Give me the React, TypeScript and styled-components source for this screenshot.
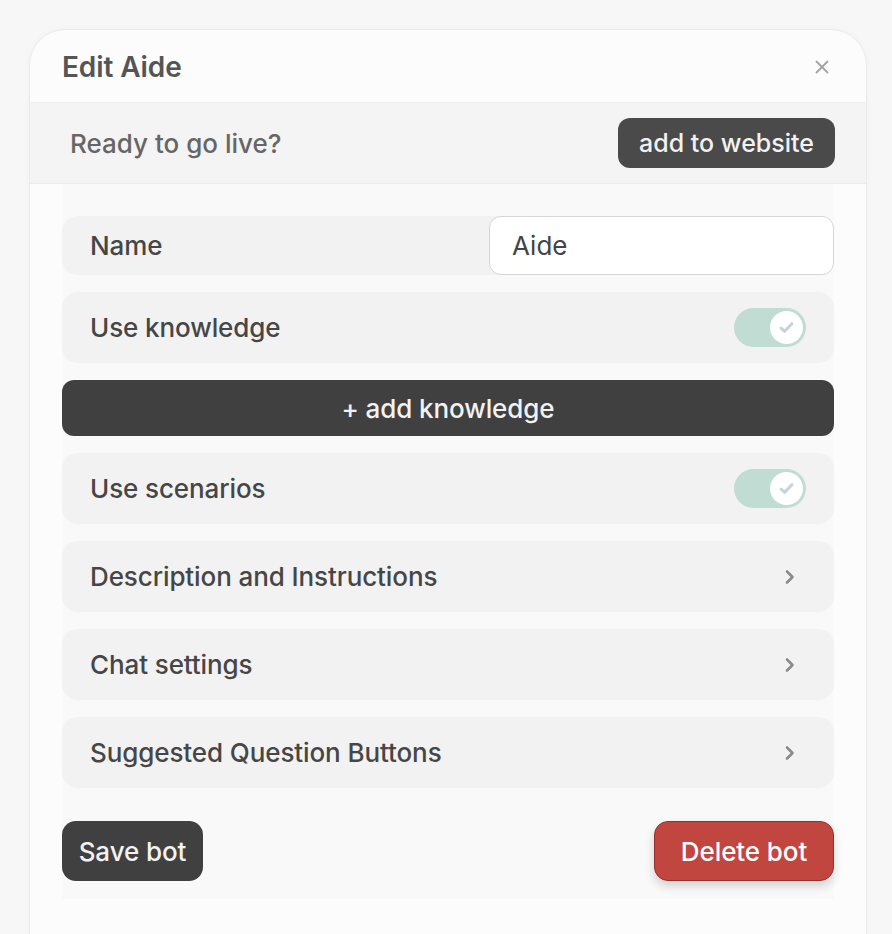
import React, {useState} from "react";
import styled, {createGlobalStyle} from "styled-components";

const GlobalStyle = createGlobalStyle`
  html, body {
    margin: 0;
    padding: 0;
    background: #f7f7f7;
    font-family: Inter, "Noto Sans", sans-serif;
    overflow: hidden;
  }
  * { box-sizing: border-box; }
`;

const Page = styled.div`
  padding: 29px 25px 0 29px;
  height: 934px;
`;

const Card = styled.div`
  background: #fcfcfc;
  border: 1px solid #ebebeb;
  border-radius: 36px 36px 0 0;
  padding-bottom: 80px;
  box-shadow: 0 0 6px rgba(0, 0, 0, 0.03);
`;

const Header = styled.div`
  height: 73px;
  display: flex;
  align-items: center;
  justify-content: space-between;
  padding: 2px 34px 0 32px;
  border-bottom: 1px solid #ededed;
`;

const Title = styled.h2`
  margin: 0;
  font-size: 28px;
  font-weight: 600;
  color: #555;
  letter-spacing: -0.1px;
`;

const CloseButton = styled.button`
  border: none;
  background: none;
  padding: 0;
  width: 20px;
  height: 20px;
  display: flex;
  align-items: center;
  justify-content: center;
  cursor: pointer;
`;

const LiveBand = styled.div`
  height: 81px;
  background: #f4f4f4;
  border-bottom: 1px solid #ececec;
  display: flex;
  align-items: center;
  justify-content: space-between;
  padding: 0 31px 0 40px;
`;

const LiveText = styled.span`
  font-size: 26px;
  font-weight: 500;
  color: #666;
`;

const DarkButton = styled.button<{$full?: boolean; $h: number; $radius: number}>`
  border: none;
  background: #404040;
  color: #f2f2f2;
  font-family: inherit;
  font-size: 26px;
  font-weight: 500;
  letter-spacing: -0.1px;
  height: ${(p) => p.$h}px;
  border-radius: ${(p) => p.$radius}px;
  padding: 0 18px;
  width: ${(p) => (p.$full ? "100%" : "auto")};
  cursor: pointer;
`;

const WebsiteButton = styled(DarkButton)`
  background: #4a4a4a;
  padding: 0 21px;
  font-size: 25px;
  letter-spacing: 0;
`;

const Panel = styled.div`
  margin: 0 32px 0 32px;
  background: #f9f9f9;
  padding: 32px 0 18px;
  display: flex;
  flex-direction: column;
  gap: 17px;
`;

const Row = styled.div<{$h: number}>`
  height: ${(p) => p.$h}px;
  background: #f2f2f2;
  border-radius: 16px;
  display: flex;
  align-items: center;
  justify-content: space-between;
  padding-left: 28px;
  padding-right: 28px;
  cursor: default;
`;

const NavRow = styled(Row)`
  padding-right: 38px;
  cursor: pointer;
`;

const Label = styled.span`
  font-size: 26px;
  font-weight: 500;
  color: #464646;
  letter-spacing: -0.1px;
`;

const NameInput = styled.input`
  width: 345px;
  height: 59px;
  margin-right: -28px;
  border: 1.5px solid #d6d6d6;
  border-radius: 12px;
  background: #fff;
  font-family: inherit;
  font-size: 26px;
  color: #444;
  padding: 0 22px;
  outline: none;
`;

const Track = styled.button<{$on: boolean}>`
  width: 72px;
  height: 39px;
  border-radius: 20px;
  border: none;
  padding: 3px;
  background: ${(p) => (p.$on ? "#c1dcd2" : "#d6d6d6")};
  display: flex;
  justify-content: ${(p) => (p.$on ? "flex-end" : "flex-start")};
  align-items: center;
  cursor: pointer;
`;

const Knob = styled.span`
  width: 33px;
  height: 33px;
  border-radius: 50%;
  background: #fff;
  display: flex;
  align-items: center;
  justify-content: center;
`;

const Footer = styled.div`
  display: flex;
  justify-content: space-between;
  margin-top: 16px;
`;

const SaveButton = styled(DarkButton)`
  width: 141px;
  padding: 0;
`;

const DeleteButton = styled.button`
  width: 180px;
  height: 60px;
  border-radius: 14px;
  border: 1.5px solid #92302b;
  background: #c24640;
  color: #fff;
  font-family: inherit;
  font-size: 26px;
  font-weight: 500;
  letter-spacing: -0.1px;
  box-shadow: 0 5px 10px rgba(0, 0, 0, 0.16);
  cursor: pointer;
`;

const Toggle: React.FC<{on: boolean; onChange: () => void}> = ({on, onChange}) => (
  <Track $on={on} onClick={onChange}>
    <Knob>
      {on && (
        <svg width="19" height="19" viewBox="0 0 16 16">
          <path d="M3.5 8.5 L6.5 11.2 L12.5 4.8" fill="none" stroke="#c4d4dd" strokeWidth="2.6" strokeLinecap="round" strokeLinejoin="round"/>
        </svg>
      )}
    </Knob>
  </Track>
);

const Chevron = () => (
  <svg width="12" height="16" viewBox="0 0 12 16">
    <path d="M3 2.5 L8.5 8 L3 13.5" fill="none" stroke="#8a8a8a" strokeWidth="2.6" strokeLinecap="round" strokeLinejoin="round"/>
  </svg>
);

const App: React.FC = () => {
  const [name, setName] = useState("Aide");
  const [useKnowledge, setUseKnowledge] = useState(true);
  const [useScenarios, setUseScenarios] = useState(true);

  return (
    <Page>
      <GlobalStyle/>
      <Card>
        <Header>
          <Title>Edit Aide</Title>
          <CloseButton aria-label="close">
            <svg width="14" height="14" viewBox="0 0 14 14">
              <path d="M1.5 1.5 L12.5 12.5 M12.5 1.5 L1.5 12.5" stroke="#a3a3a3" strokeWidth="1.8" strokeLinecap="round"/>
            </svg>
          </CloseButton>
        </Header>

        <LiveBand>
          <LiveText>Ready to go live?</LiveText>
          <WebsiteButton $h={50} $radius={12}>add to website</WebsiteButton>
        </LiveBand>

        <Panel>
          <Row $h={59}>
            <Label>Name</Label>
            <NameInput value={name} onChange={(e) => setName(e.target.value)}/>
          </Row>
          <Row $h={71}>
            <Label>Use knowledge</Label>
            <Toggle on={useKnowledge} onChange={() => setUseKnowledge(!useKnowledge)}/>
          </Row>
          <DarkButton $full $h={56} $radius={12}>+ add knowledge</DarkButton>
          <Row $h={71}>
            <Label>Use scenarios</Label>
            <Toggle on={useScenarios} onChange={() => setUseScenarios(!useScenarios)}/>
          </Row>
          <NavRow $h={71}>
            <Label>Description and Instructions</Label>
            <Chevron/>
          </NavRow>
          <NavRow $h={71}>
            <Label>Chat settings</Label>
            <Chevron/>
          </NavRow>
          <NavRow $h={71}>
            <Label>Suggested Question Buttons</Label>
            <Chevron/>
          </NavRow>
          <Footer>
            <SaveButton $h={60} $radius={14}>Save bot</SaveButton>
            <DeleteButton>Delete bot</DeleteButton>
          </Footer>
        </Panel>
      </Card>
    </Page>
  );
};

export default App;
